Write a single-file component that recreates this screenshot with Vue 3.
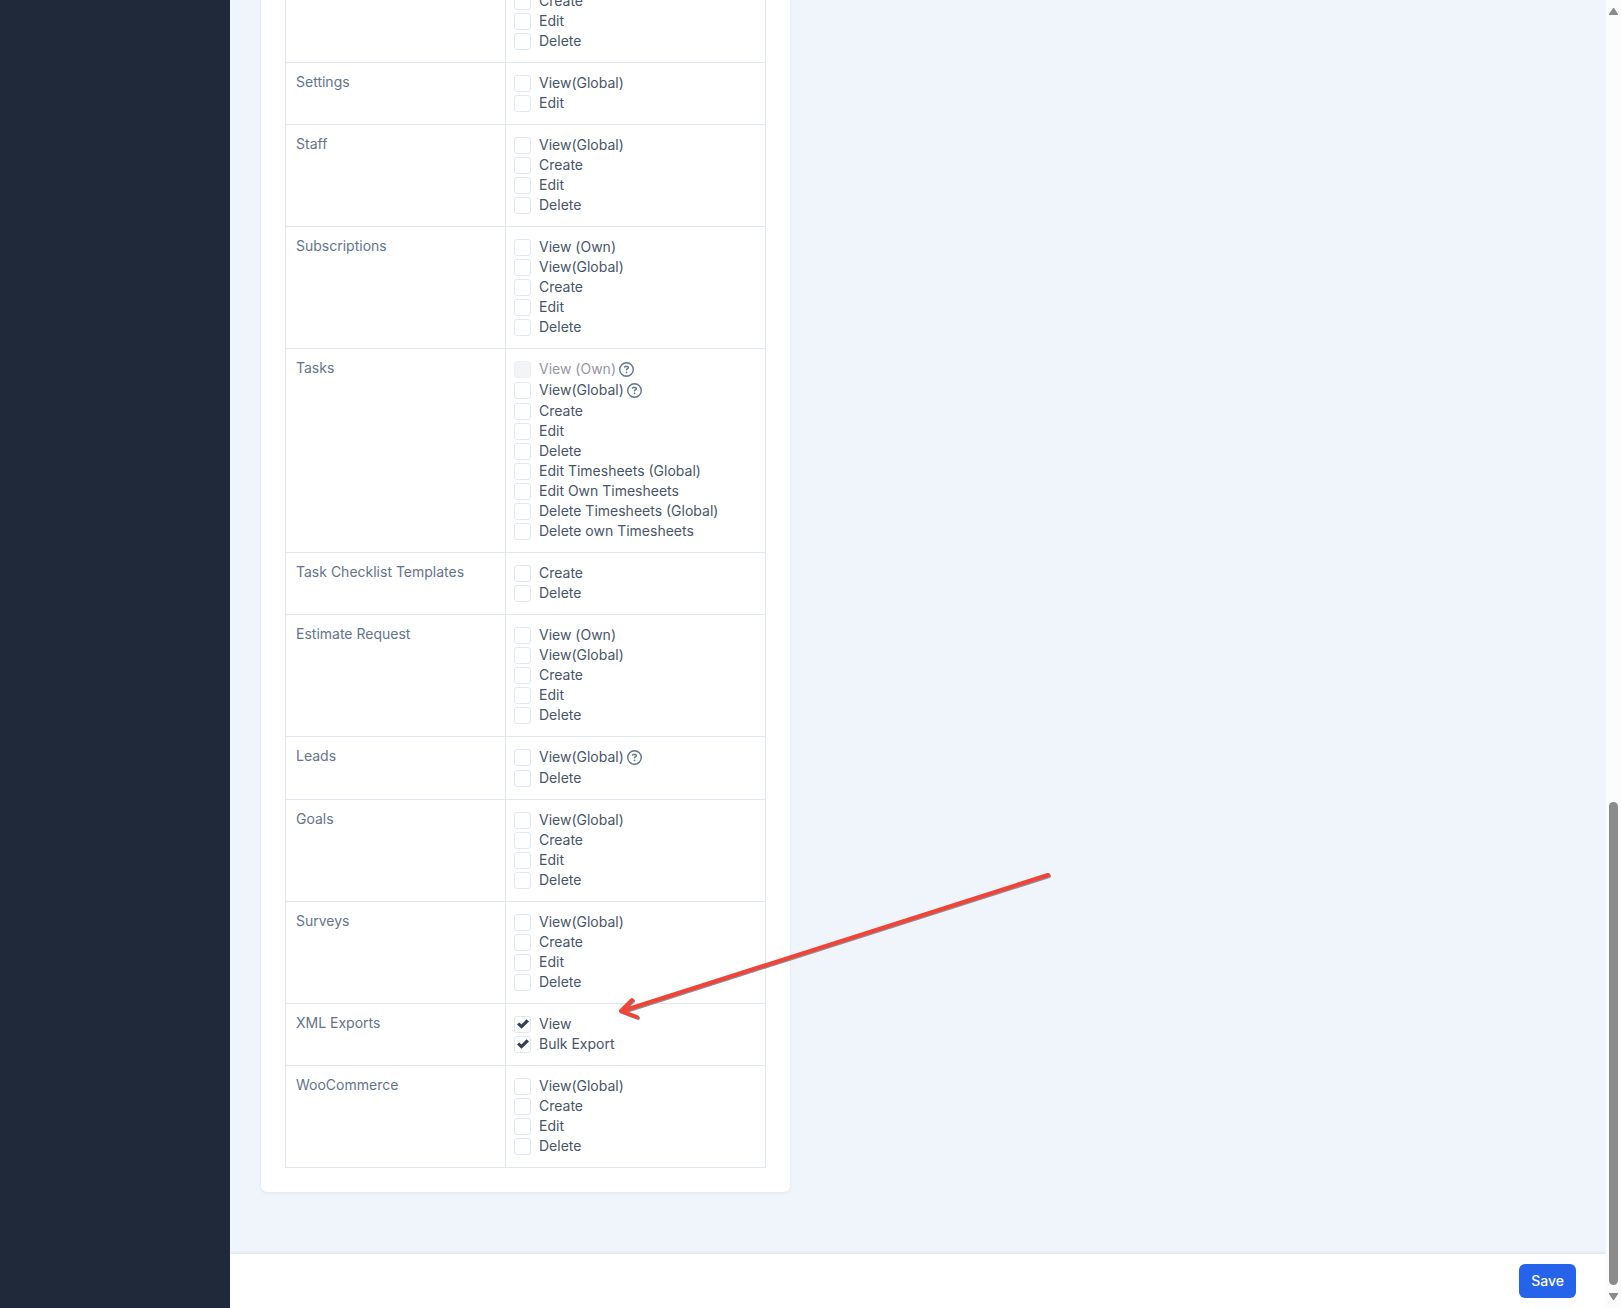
<script setup>
import { ref } from 'vue';

const saving = ref(false);

// short form: a string is a plain capability, an object carries extra state
const makeOptions = (items) => items.map((item) => ({
    checked: false,
    disabled: false,
    help: false,
    ...(typeof item === 'string' ? { label: item } : item)
}));

const features = ref([
    { name: '', options: makeOptions(['Create', 'Edit', 'Delete']) },
    { name: 'Settings', options: makeOptions(['View(Global)', 'Edit']) },
    { name: 'Staff', options: makeOptions(['View(Global)', 'Create', 'Edit', 'Delete']) },
    { name: 'Subscriptions', options: makeOptions(['View (Own)', 'View(Global)', 'Create', 'Edit', 'Delete']) },
    {
        name: 'Tasks',
        options: makeOptions([
            { label: 'View (Own)', disabled: true, help: true },
            { label: 'View(Global)', help: true },
            'Create',
            'Edit',
            'Delete',
            'Edit Timesheets (Global)',
            'Edit Own Timesheets',
            'Delete Timesheets (Global)',
            'Delete own Timesheets'
        ])
    },
    { name: 'Task Checklist Templates', options: makeOptions(['Create', 'Delete']) },
    { name: 'Estimate Request', options: makeOptions(['View (Own)', 'View(Global)', 'Create', 'Edit', 'Delete']) },
    { name: 'Leads', options: makeOptions([{ label: 'View(Global)', help: true }, 'Delete']) },
    { name: 'Goals', options: makeOptions(['View(Global)', 'Create', 'Edit', 'Delete']) },
    { name: 'Surveys', options: makeOptions(['View(Global)', 'Create', 'Edit', 'Delete']) },
    {
        name: 'XML Exports',
        options: makeOptions([
            { label: 'View', checked: true },
            { label: 'Bulk Export', checked: true }
        ])
    },
    { name: 'WooCommerce', options: makeOptions(['View(Global)', 'Create', 'Edit', 'Delete']) }
]);

const save = () => {
    saving.value = true;
};
</script>

<template>
    <div class="page">
        <aside class="sidebar"></aside>
        <main class="main">
            <form class="form" @submit.prevent="save">
                <div class="content">
                    <section class="panel">
                        <table class="permissions">
                            <tbody>
                                <tr v-for="(feature, f) in features" :key="f">
                                    <th scope="row">{{ feature.name }}</th>
                                    <td>
                                        <div v-for="(option, o) in feature.options" :key="o" class="option"
                                            :class="{ disabled: option.disabled }">
                                            <span class="box">
                                                <input :id="`cap-${f}-${o}`" v-model="option.checked" type="checkbox"
                                                    :disabled="option.disabled" />
                                                <svg v-if="option.checked" class="tick" viewBox="0 0 12 10">
                                                    <path d="M0 5.6 2.2 3.6 4.5 5.6 9.6 .3 12 2.4 4.5 9.8Z" />
                                                </svg>
                                            </span>
                                            <label :for="`cap-${f}-${o}`">{{ option.label }}</label>
                                            <span v-if="option.help" class="help">
                                                <svg viewBox="0 0 512 512">
                                                    <path
                                                        d="M464 256A208 208 0 1 0 48 256a208 208 0 1 0 416 0zM0 256a256 256 0 1 1 512 0A256 256 0 1 1 0 256zm169.8-90.7c7.9-22.3 29.1-37.3 52.8-37.3h58.3c34.9 0 63.1 28.3 63.1 63.1c0 22.6-12.1 43.5-31.7 54.8L280 264.4c-.2 13-10.9 23.6-24 23.6c-13.3 0-24-10.7-24-24V250.5c0-8.6 4.6-16.5 12.1-20.8l44.3-25.4c4.7-2.7 7.6-7.7 7.6-13.1c0-8.4-6.8-15.1-15.1-15.1H222.6c-3.4 0-6.4 2.1-7.5 5.3l-.4 1.2c-4.4 12.5-18.2 19-30.6 14.6s-19-18.2-14.6-30.6l.4-1.2zM224 352a32 32 0 1 1 64 0 32 32 0 1 1 -64 0z" />
                                                </svg>
                                            </span>
                                        </div>
                                    </td>
                                </tr>
                            </tbody>
                        </table>
                    </section>
                    <svg class="arrow" viewBox="0 0 440 150" aria-hidden="true">
                        <g class="arrow-shadow" transform="translate(1 1)">
                            <path d="M433 5 7 141M17 130 6 141 22 147" />
                        </g>
                        <path d="M433 5 7 141M17 130 6 141 22 147" />
                    </svg>
                </div>
                <footer class="toolbar">
                    <button type="submit" class="save">Save</button>
                </footer>
            </form>
        </main>
        <div class="scrollbar" aria-hidden="true">
            <svg viewBox="0 0 9 7"><path d="M0 7V6L4 0H5L9 6V7Z" /></svg>
            <span class="track"><span class="thumb"></span></span>
            <svg viewBox="0 0 9 7"><path d="M0 0V1L4 7H5L9 1V0Z" /></svg>
        </div>
    </div>
</template>

<style>
body {
    margin: 0;
    background: #f0f4fb;
}
</style>

<style scoped>
.page {
    display: grid;
    grid-template-columns: 230px 1fr 15px;
    height: 100vh;
    overflow: hidden;
    font-family: Inter, "Liberation Sans", sans-serif;
    font-size: 14px;
    line-height: 20px;
    color: #475569;
}

.sidebar {
    background: #1f293a;
}

.main {
    min-width: 0;
    min-height: 0;
    overflow: hidden;
}

.form {
    display: flex;
    flex-direction: column;
    height: 100%;
}

/* the list is kept at its end, older rows run out above the window */
.content {
    position: relative;
    flex: 1;
    min-height: 0;
    display: grid;
    grid-template-columns: repeat(12, 1fr);
    column-gap: 30px;
    align-content: end;
    padding: 0 33px 62px 31px;
    overflow: hidden;
    background: #f0f4fb;
}

.panel {
    grid-column: span 5;
    padding: 24px;
    background: #fff;
    border-radius: 6px;
    box-shadow: 0 0 0 1px #e8edf4, 0 1px 3px #e2e8f0;
}

.permissions {
    width: 100%;
    border-collapse: collapse;
    table-layout: fixed;
}

.permissions th,
.permissions td {
    border: 1px solid #e2e8f0;
    vertical-align: top;
    text-align: left;
}

.permissions th {
    width: 220px;
    padding: 9px 10px;
    box-sizing: border-box;
    font-weight: 400;
    color: #64748b;
}

.permissions td {
    padding: 10px 8px 11px;
}

.option {
    display: flex;
    align-items: flex-start;
}

.option label {
    margin-left: 8px;
}

.option.disabled label {
    color: #94979f;
}

.box {
    display: grid;
    place-items: center;
    height: 20px;
}

.box > * {
    grid-area: 1 / 1;
}

.box input {
    appearance: none;
    width: 17px;
    height: 17px;
    margin: 0;
    border: 1px solid #e2e8f0;
    border-radius: 3px;
    background: #fff;
}

.box input:disabled {
    background: #f3f4f6;
    border-color: #eeeff2;
}

.tick {
    width: 12px;
    height: 10px;
    fill: #334155;
    pointer-events: none;
}

.help {
    display: flex;
    align-items: center;
    height: 21px;
    margin-left: 3px;
}

.help svg {
    width: 15px;
    height: 15px;
    fill: #64748b;
}

.arrow {
    position: absolute;
    left: 385px;
    bottom: 234px;
    width: 440px;
    height: 150px;
    fill: none;
    stroke: #f44336;
    stroke-width: 4;
    stroke-linecap: round;
    stroke-linejoin: round;
    pointer-events: none;
}

.arrow-shadow {
    stroke: #8a8f96;
}

.toolbar {
    position: relative;
    display: flex;
    justify-content: flex-end;
    padding: 10px 30px;
    background: #fff;
    box-shadow: 0 -1px 3px #dcdfe5;
}

.save {
    padding: 7px 12px;
    border: 0;
    border-radius: 6px;
    background: #2563eb;
    color: #fff;
    font: inherit;
    font-weight: 500;
}

.scrollbar {
    display: flex;
    flex-direction: column;
    align-items: center;
    padding: 8px 3px;
    background: #fcfcfc;
}

.scrollbar svg {
    width: 9px;
    height: 7px;
    fill: #8b8b8b;
}

.track {
    flex: 1;
    display: flex;
    flex-direction: column;
    justify-content: flex-end;
    padding-bottom: 8px;
}

.thumb {
    width: 9px;
    height: 38%;
    border-radius: 5px;
    background: #8b8b8b;
}
</style>
